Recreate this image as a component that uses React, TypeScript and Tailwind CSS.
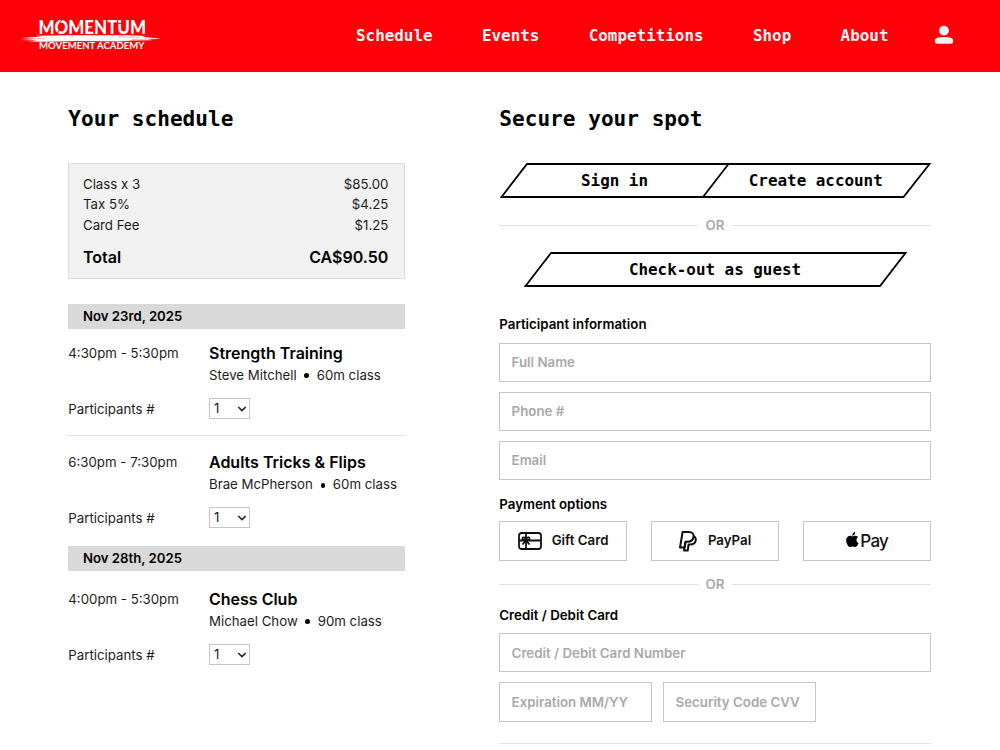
import { useState } from "react";

const NAV_LINKS = ["Schedule", "Events", "Competitions", "Shop", "About"];

const FEES = [
  { label: "Class x 3", amount: "$85.00" },
  { label: "Tax 5%", amount: "$4.25" },
  { label: "Card Fee", amount: "$1.25" },
];

type ClassItem = {
  time: string;
  title: string;
  coach: string;
  length: string;
};

const NOV_23: ClassItem[] = [
  { time: "4:30pm - 5:30pm", title: "Strength Training", coach: "Steve Mitchell", length: "60m class" },
  { time: "6:30pm - 7:30pm", title: "Adults Tricks & Flips", coach: "Brae McPherson", length: "60m class" },
];

const NOV_28: ClassItem[] = [
  { time: "4:00pm - 5:30pm", title: "Chess Club", coach: "Michael Chow", length: "90m class" },
];

function Logo() {
  return (
    <svg width="142" height="52" viewBox="0 -8 142 52" className="block" role="img" aria-label="Momentum Movement Academy">
      <text
        x="18.5"
        y="15.5"
        textLength="107.5"
        lengthAdjust="spacingAndGlyphs"
        fill="#fff"
        fontFamily="Lato, sans-serif"
        fontWeight="900"
        fontSize="19.5"
      >
        MOMENTUM
      </text>
      {/* stencil cuts */}
      <path
        d="M23.800 0v8M43.500 0l-4 5M37 16l3-5M59 1v8M76 9.200h-7M87 1v9M97 5.500h9M118 1v8"
        stroke="#ff0009"
        strokeWidth=".9"
        fill="none"
      />
      <path
        d="M1 20 22 18.400 15 17.800 50 17.300 108 17.300 126 18.100 122 18.800 141 20.800 128 21.600 133 22.300 112 22.600 100 23.600 60 23 27 23.800 8 23.400 18 22.400 0 22 14 21Z"
        fill="#fff"
      />
      <path d="M3 21.100 24 20.300M112 21.600l22-.6M98 18.800l22 .6" stroke="#ff0009" strokeWidth=".5" opacity=".6" />
      <text
        x="19"
        y="31.3"
        textLength="105.5"
        lengthAdjust="spacingAndGlyphs"
        fill="#fff"
        fontFamily="Lato, sans-serif"
        fontWeight="700"
        fontSize="10.2"
      >
        MOVEMENT ACADEMY
      </text>
    </svg>
  );
}

function Header() {
  return (
    <header className="flex h-[71.5px] items-center bg-[#ff0009] pl-5">
      <div className="w-[336px]">
        <Logo />
      </div>
      <nav className="flex gap-[49.4px] font-['DejaVu_Sans_Mono',monospace] text-[15.9px] font-bold leading-5 text-[#f9f4f4]">
        {NAV_LINKS.map((link) => (
          <a key={link} href="#">
            {link}
          </a>
        ))}
      </nav>
      <button type="button" className="mb-[2px] ml-[45.5px]" aria-label="Account">
        <svg width="20" height="20" viewBox="0 0 20 20" fill="#f1f1f1" className="block">
          <circle cx="10" cy="5.6" r="4.9" />
          <path d="M.8 15.800C.8 13 4.800 12 10 12s9.200 1 9.200 3.800c0 2-.6 3-2.200 3H3c-1.600 0-2.200-1-2.200-3Z" />
        </svg>
      </button>
    </header>
  );
}

function DateBar({ children }: { children: string }) {
  return (
    <div className="flex h-[25.3px] items-center bg-[#d9d9d9] pl-[14.7px] pt-px text-[13.2px] font-semibold text-black">
      {children}
    </div>
  );
}

function ClassRow({ item }: { item: ClassItem }) {
  const [count, setCount] = useState("1");

  return (
    <div className="grid grid-cols-[140.7px_1fr] text-[13.25px] leading-[22px]">
      <span>{item.time}</span>
      <div>
        <h3 className="text-[16px] font-semibold leading-[22px] text-black">{item.title}</h3>
        <p className="flex items-center whitespace-nowrap">
          {item.coach}
          <span className="mx-[7.7px] mt-0.5 size-[4.6px] rounded-full bg-black" />
          {item.length}
        </p>
      </div>
      <span className="mt-[12px]">Participants #</span>
      <div className="relative mt-[12px] w-[41.5px]">
        <select
          value={count}
          onChange={(e) => setCount(e.target.value)}
          className="block h-[21px] w-full appearance-none border border-[#c4c4c4] bg-white pl-1 leading-[19px]"
          aria-label={`Participants for ${item.title}`}
        >
          {["1", "2", "3", "4"].map((n) => (
            <option key={n}>{n}</option>
          ))}
        </select>
        <svg width="10" height="6" viewBox="0 0 10 6" className="pointer-events-none absolute right-[3px] top-[8px]">
          <path d="M1.300 1 5 4.600 8.700 1" fill="none" stroke="#222" strokeWidth="1.600" />
        </svg>
      </div>
    </div>
  );
}

function OrDivider() {
  return (
    <div className="flex h-5 items-center gap-2 text-[13.3px] font-semibold text-[#a9a9a9]">
      <span className="h-px flex-1 bg-[#dfdfdf]" />
      <span className="pt-px">OR</span>
      <span className="h-px flex-1 bg-[#dfdfdf]" />
    </div>
  );
}

function Field({ placeholder, className = "w-full" }: { placeholder: string; className?: string }) {
  return (
    <input
      placeholder={placeholder}
      className={`${className} block h-[39.3px] border border-[#c6c6c6] bg-white px-[11.3px] text-[13.3px] font-semibold placeholder:text-[#a9a9a9] placeholder:opacity-100`}
    />
  );
}

function GiftCardIcon() {
  return (
    <svg width="24" height="18" viewBox="0 0 24 18" fill="none" stroke="#111" strokeWidth="1.8" strokeLinejoin="round">
      <rect x="1" y="1" width="22" height="16" rx="2.5" />
      <path d="M8 1v16M1 8.500h22M8 8.500C5 8.500 4 7.500 4.500 6.200 5.200 4.500 7.400 5.500 8 8.500c.6-3 2.800-4 3.500-2.300C12 7.500 11 8.500 8 8.500ZM8 8.500l-3.500 4M8 8.500l3.500 4" />
    </svg>
  );
}

function PayPalIcon() {
  return (
    <svg width="18" height="21" viewBox="0 0 18 21" fill="none" stroke="#111" strokeWidth="2" strokeLinejoin="round">
      <path d="M5.500 16.500H1L3.600 1h6.200c3.600 0 5.300 2 4.700 5-.6 3.200-3 4.700-6.200 4.700H6.600Z" />
      <path d="M14.600 5.200c2 .8 2.500 2.500 2.100 4.300-.6 2.800-2.700 4-5.500 4H9.600L8.700 19.600H5l1.500-9" />
    </svg>
  );
}

function AppleLogo() {
  return (
    <svg width="13" height="15" viewBox="0 0 24 28" fill="#000" className="mb-[3px]">
      <path d="M17.100 0c.2 1.700-.5 3.300-1.500 4.500-1 1.200-2.600 2.100-4.200 2-.2-1.600.6-3.300 1.500-4.300C14 .9 15.700.1 17.100 0ZM22.500 9.500c-.2.100-3.200 1.800-3.100 5.400 0 4.300 3.800 5.700 3.900 5.700-.1.100-.6 2-2 4.100-1.200 1.700-2.400 3.300-4.400 3.300-1.900 0-2.500-1.100-4.700-1.100s-2.900 1.100-4.700 1.100c-1.900 0-3.300-1.800-4.500-3.500C.7 21.100-1.200 14.900 1.400 10.600 2.700 8.400 5 7.100 7.400 7c1.800 0 3.600 1.200 4.700 1.200s3.300-1.500 5.500-1.300c.9 0 3.500.4 4.900 2.600Z" />
    </svg>
  );
}

const PAY_BUTTON =
  "flex h-[39.3px] w-[127.6px] items-center justify-center border border-[#c6c6c6] pt-px text-[13.3px] font-semibold text-[#111]";

export default function App() {
  return (
    <div className="h-[750px] w-[1000px] overflow-hidden bg-white font-['Inter',sans-serif] text-[#1c1c1c]">
      <Header />

      <main className="flex items-start gap-[93.9px] pl-[68.3px] pt-[33px]">
        <section className="w-[337.1px]">
          <h1 className="font-['DejaVu_Sans_Mono',monospace] text-[21.1px] font-bold leading-7 text-black">Your schedule</h1>

          <div className="mt-[30.8px] h-[115.3px] border border-[#dcdcdc] bg-[#f1f1f1] pl-[13.7px] pr-4 pt-[9.3px] text-[13.25px] leading-[20.6px]">
            {FEES.map((fee) => (
              <div key={fee.label} className="flex justify-between">
                <span>{fee.label}</span>
                <span>{fee.amount}</span>
              </div>
            ))}
            <div className="mt-[10.5px] flex justify-between text-[16px] font-semibold leading-[22px] text-black">
              <span>Total</span>
              <span>CA$90.50</span>
            </div>
          </div>

          <div className="mt-[25.5px]">
            <DateBar>Nov 23rd, 2025</DateBar>
            <div className="pt-[12.2px]">
              <ClassRow item={NOV_23[0]} />
            </div>
            <div className="mb-[15.6px] mt-[15.1px] h-px bg-[#e3e3e3]" />
            <ClassRow item={NOV_23[1]} />
          </div>

          <div className="mt-[16.6px]">
            <DateBar>Nov 28th, 2025</DateBar>
            <div className="pt-[16.5px]">
              <ClassRow item={NOV_28[0]} />
            </div>
          </div>
        </section>

        <section className="w-[431.5px]">
          <h1 className="font-['DejaVu_Sans_Mono',monospace] text-[21.1px] font-bold leading-7 text-black">Secure your spot</h1>

          <div className="relative mt-[30.8px] flex h-[35px] font-['DejaVu_Sans_Mono',monospace] text-[15.9px] font-bold text-black">
            <svg width="432" height="35" className="absolute inset-0" fill="none" stroke="#000" strokeWidth="1.8">
              <path d="M28 1H430.500L404.500 34H2.500ZM229.500 1 204 34" />
            </svg>
            <button type="button" className="relative w-[230.5px] pt-px">
              Sign in
            </button>
            <button type="button" className="relative w-[172px] pt-px">
              Create account
            </button>
          </div>

          <div className="mt-[17px]">
            <OrDivider />
          </div>

          <button
            type="button"
            className="relative mt-[17px] block h-[35px] w-full pt-px font-['DejaVu_Sans_Mono',monospace] text-[15.9px] font-bold text-black"
          >
            <svg width="432" height="35" className="absolute inset-0" fill="none" stroke="#000" strokeWidth="1.8">
              <path d="M52 1H406.500L381 34H26.500Z" />
            </svg>
            <span className="relative">Check-out as guest</span>
          </button>

          <h2 className="mt-[27px] text-[13.3px] font-semibold leading-5 text-black">Participant information</h2>
          <div className="mt-[8.3px] flex flex-col gap-[9.7px]">
            <Field placeholder="Full Name" />
            <Field placeholder="Phone #" />
            <Field placeholder="Email" />
          </div>

          <h2 className="mt-[14px] text-[13.3px] font-semibold leading-5 text-black">Payment options</h2>
          <div className="mt-[7.4px] flex justify-between">
            <button type="button" className={`${PAY_BUTTON} gap-[10px]`}>
              <GiftCardIcon />
              Gift Card
            </button>
            <button type="button" className={`${PAY_BUTTON} gap-[11px]`}>
              <PayPalIcon />
              PayPal
            </button>
            <button type="button" className={`${PAY_BUTTON} gap-[1.5px]`} aria-label="Apple Pay">
              <AppleLogo />
              <span className="text-[17px] font-medium tracking-[-0.7px]">Pay</span>
            </button>
          </div>

          <div className="mt-[14px]">
            <OrDivider />
          </div>

          <h2 className="mt-[10.8px] text-[13.3px] font-semibold leading-5 text-black">Credit / Debit Card</h2>
          <div className="mt-[7.8px] flex flex-wrap gap-x-[11.5px] gap-y-[9.8px]">
            <Field placeholder="Credit / Debit Card Number" />
            <Field placeholder="Expiration MM/YY" className="w-[152.5px]" />
            <Field placeholder="Security Code CVV" className="w-[152.5px]" />
          </div>

          <div className="mt-[21.7px] h-px bg-[#e3e3e3]" />
        </section>
      </main>
    </div>
  );
}
